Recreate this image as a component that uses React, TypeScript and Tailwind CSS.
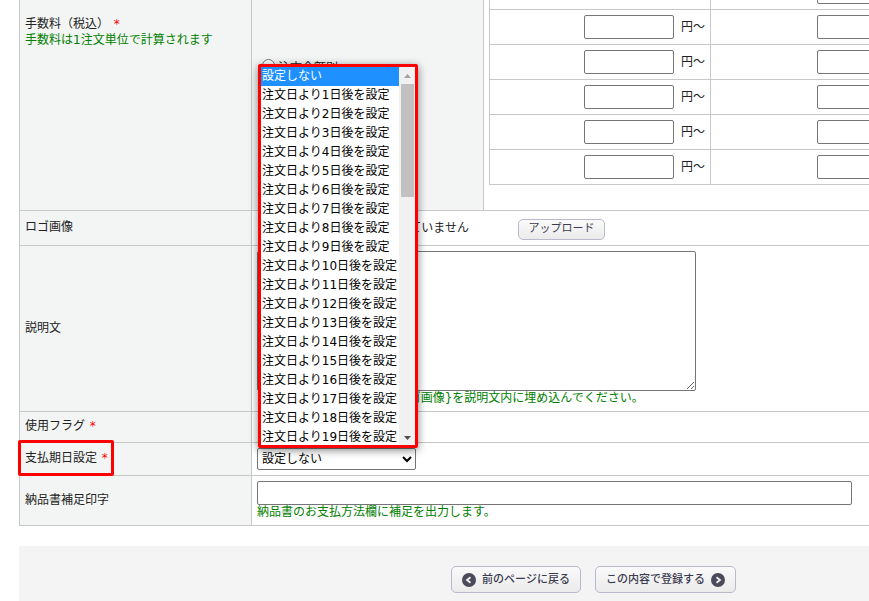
import { useState, type ReactNode } from "react";

const DUE_OPTIONS = [
  "設定しない",
  ...Array.from({ length: 19 }, (_, i) => `注文日より${i + 1}日後を設定`),
];

const FEE_ROWS = [1, 2, 3, 4, 5];

const inputClass = "h-6 rounded-[2px] border border-[#767676] bg-white px-1";
const buttonClass =
  "flex items-center rounded-[5px] border border-[#b9b9cb] bg-linear-to-b from-[#fafafa] to-[#ebebeb] text-[11px] text-[#3c3c50]";

function Required() {
  return <span className="ml-px text-[#ff0000]">*</span>;
}

function Note({ children }: { children: ReactNode }) {
  return <p className="leading-[15px] text-[#008000]">{children}</p>;
}

function FormRow({ label, children }: { label: ReactNode; children: ReactNode }) {
  return (
    <div className="flex border-b border-[#c8c8c8]">
      <div className="relative flex w-[231px] shrink-0 items-center bg-[#f3f5f4] px-[5px] pb-0.5">{label}</div>
      <div className="flex-1 border-l border-[#c8c8c8] p-[5px]">{children}</div>
    </div>
  );
}

function FeeTable() {
  return (
    <table className="w-full table-fixed border-collapse">
      <tbody>
        <tr className="h-[35px]">
          <td className="w-[221px] border border-[#c8c8c8]"></td>
          <td className="border border-[#c8c8c8] py-[5px] pl-[106px]">
            <input aria-label="手数料" className={`${inputClass} block w-[90px]`} />
          </td>
        </tr>
        {FEE_ROWS.map((n) => (
          <tr key={n} className="h-[35px]">
            <td className="border border-[#c8c8c8] px-[5px]">
              <label className="flex items-center justify-end gap-[7px]">
                <input className={`${inputClass} w-[90px]`} />
                円～
              </label>
            </td>
            <td className="border border-[#c8c8c8] pl-[106px]">
              <input aria-label="手数料" className={`${inputClass} block w-[90px]`} />
            </td>
          </tr>
        ))}
      </tbody>
    </table>
  );
}

function DueSelect() {
  const [value, setValue] = useState(DUE_OPTIONS[0]);

  return (
    <div className="relative w-[159px]">
      <select
        id="due"
        value={value}
        onChange={(e) => setValue(e.target.value)}
        className="block h-[22px] w-full rounded-[2px] border border-[#767676] bg-white text-black"
      >
        {DUE_OPTIONS.map((o) => (
          <option key={o}>{o}</option>
        ))}
      </select>
      <div className="absolute bottom-full left-px z-10 flex h-[384px] w-[160px] overflow-hidden rounded-[2px] border-[3px] border-[#ff0000] bg-white shadow-[0_2px_8px_rgba(0,0,0,0.5)]">
        <ul role="listbox" aria-label="支払期日" className="flex-1 text-black">
          {DUE_OPTIONS.map((o) => (
            <li
              key={o}
              role="option"
              aria-selected={o === value}
              onClick={() => setValue(o)}
              className={`h-[19px] pl-px leading-[19px] whitespace-nowrap ${o === value ? "bg-[#1e90ff] text-white" : ""}`}
            >
              {o}
            </li>
          ))}
        </ul>
        <div className="flex w-4 flex-col items-center bg-[#f1f1f1]">
          <svg className="h-[17px] w-4 shrink-0" viewBox="0 0 16 17">
            <path d="M5 11h7L8.500 7z" fill="#a3a3a3" />
          </svg>
          <div className="h-[113px] w-[13px] bg-[#c1c1c1]" />
          <svg className="mt-auto h-[17px] w-4 shrink-0" viewBox="0 0 16 17">
            <path d="M5 8h7l-3.500 4z" fill="#505050" />
          </svg>
        </div>
      </div>
    </div>
  );
}

function ArrowIcon({ left }: { left?: boolean }) {
  return (
    <svg className="size-[14px]" viewBox="0 0 14 14">
      <circle cx="7" cy="7" r="7" fill="#4a4a5a" />
      <path
        d={left ? "M8.500 4.300L5 7l3.500 2.700" : "M5.500 4.300L9 7l-3.500 2.700"}
        fill="none"
        stroke="#f0f0f4"
        strokeWidth="1.800"
      />
    </svg>
  );
}

export default function App() {
  return (
    <div className="overflow-hidden bg-white pl-[19px] font-['DejaVu_Sans','Noto_Sans_CJK_JP',sans-serif] text-xs leading-4 text-[#222]">
      <form className="min-w-[1149px]" onSubmit={(e) => e.preventDefault()}>
        <div className="border-l border-[#c8c8c8]">
          <div className="flex h-[211px] border-b border-[#c8c8c8] bg-[#f3f5f4]">
            <div className="w-[231px] shrink-0 px-[5px] pt-4">
              <p>
                手数料（税込） <Required />
              </p>
              <p className="text-[#008000]">手数料は1注文単位で計算されます</p>
            </div>
            <div className="w-[232px] shrink-0 border-l border-[#c8c8c8] pt-[59px] pl-[10px]">
              <label className="flex items-center gap-[3px]">
                <input
                  type="radio"
                  name="fee"
                  className="mb-1 size-[13px] appearance-none rounded-full border border-[#767676] bg-white"
                />
                注文金額別
              </label>
            </div>
            <div className="flex min-w-0 flex-1 flex-col justify-end overflow-hidden border-l border-[#c8c8c8] bg-white px-[5px] pb-[25px]">
              <FeeTable />
            </div>
          </div>

          <FormRow label="ロゴ画像">
            <div className="flex h-6 items-end">
              <span className="w-[212px] self-center text-right whitespace-nowrap">登録されていません</span>
              <button type="button" className={`${buttonClass} ml-[49px] h-[21px] w-[87px] justify-center pb-0.5`}>
                アップロード
              </button>
            </div>
          </FormRow>

          <FormRow label={<label htmlFor="description">説明文</label>}>
            <textarea
              id="description"
              className="block h-[140px] w-[439px] rounded-[2px] border border-[#767676] bg-white p-0.5"
            />
            <Note>ロゴ画像を使用する時は{"{ロゴ画像}"}を説明文内に埋め込んでください。</Note>
          </FormRow>

          <FormRow
            label={
              <span>
                使用フラグ <Required />
              </span>
            }
          >
            <div className="h-5" />
          </FormRow>

          <FormRow
            label={
              <>
                <label htmlFor="due">
                  支払期日設定 <Required />
                </label>
                <span className="pointer-events-none absolute -top-[3px] -left-[2px] z-10 h-9 w-24 rounded-[2px] border-[3px] border-[#ff0000]" />
              </>
            }
          >
            <DueSelect />
          </FormRow>

          <FormRow label={<label htmlFor="slip">納品書補足印字</label>}>
            <input id="slip" className={`${inputClass} block w-[595px]`} />
            <Note>納品書のお支払方法欄に補足を出力します。</Note>
          </FormRow>
        </div>

        <div className="mt-5 flex justify-center gap-[14px] bg-[#f4f4f4] py-5 font-medium">
          <button type="button" className={`${buttonClass} h-[27px] gap-[6px] px-[10px]`}>
            <ArrowIcon left />
            前のページに戻る
          </button>
          <button type="submit" className={`${buttonClass} h-[27px] gap-[6px] px-[10px]`}>
            この内容で登録する
            <ArrowIcon />
          </button>
        </div>
      </form>
    </div>
  );
}
